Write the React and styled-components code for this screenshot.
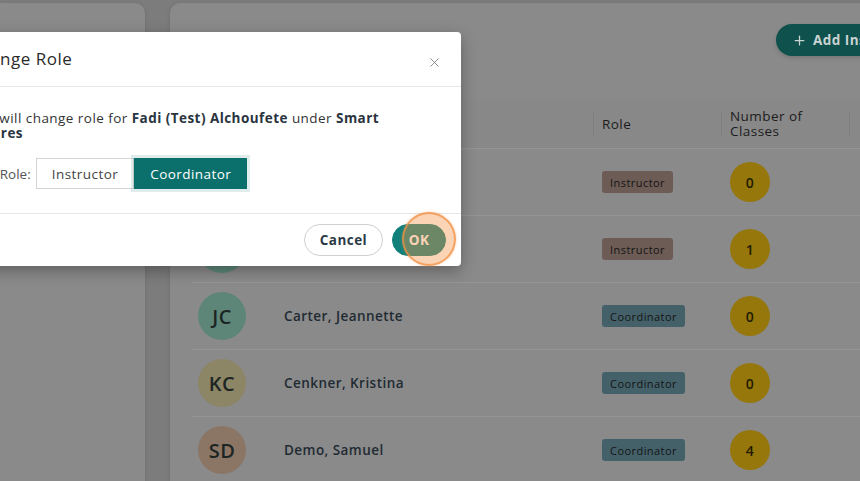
import React from 'react';
import styled, { createGlobalStyle } from 'styled-components';
import { X, Plus } from 'lucide-react';

const GlobalStyle = createGlobalStyle`
  body {
    margin: 0;
    background: #7c7c7c;
    font-family: "Open Sans", "Liberation Sans", sans-serif;
    letter-spacing: 0.45px;
    overflow: hidden;
  }
`;

const Page = styled.div`
  position: relative;
  width: 860px;
  height: 481px;
  overflow: hidden;
  display: flex;
  gap: 25px;
  padding-top: 3px;
  box-sizing: border-box;
`;

const SidePanel = styled.div`
  flex: 0 0 145px;
  background: #8a8a8a;
  border-radius: 0 10px 0 0;
  box-shadow: 0 1px 4px rgba(0, 0, 0, 0.12);
`;

const MainPanel = styled.div`
  flex: 0 0 773px;
  background: #8a8a8a;
  border-radius: 10px 0 0 0;
  padding: 21px 22px 0 22px;
  box-sizing: border-box;
  box-shadow: 0 1px 4px rgba(0, 0, 0, 0.12);
`;

const TopBar = styled.div`
  display: flex;
  justify-content: space-between;
  align-items: flex-start;
  height: 35px;
  margin-bottom: 41px;
`;

const Heading = styled.h1`
  margin: 6px 0 0;
  font-size: 20px;
  font-weight: 700;
  color: #1e1e1e;
`;

const AddButton = styled.button`
  margin-top: 0;
  height: 32px;
  width: 145px;
  flex-shrink: 0;
  border: none;
  border-radius: 16px;
  background: #0f514d;
  color: #c9d3d2;
  font-family: inherit;
  font-size: 13.5px;
  letter-spacing: 0.45px;
  font-weight: 700;
  white-space: nowrap;
  overflow: hidden;
  display: flex;
  align-items: center;
  gap: 6px;
  padding: 0 0 0 16px;
  box-shadow: 0 2px 4px rgba(0, 0, 0, 0.15);
`;

const Table = styled.div`
  display: grid;
  grid-template-columns: 401px 128px 128px 1fr;
`;

const HeadCell = styled.div`
  height: 48px;
  display: flex;
  align-items: center;
  padding-left: ${(p) => (p.$first ? '0' : '9px')};
  font-size: 13.5px;
  line-height: 15px;
  color: #1c1c1c;
  background: #888888;
  border-bottom: 1px solid #959595;
  position: relative;

  &::before {
    content: '';
    display: ${(p) => (p.$first ? 'none' : 'block')};
    position: absolute;
    left: 0;
    top: 12px;
    bottom: 12px;
    width: 1px;
    background: #7f7f7f;
  }
`;

const Cell = styled.div`
  height: 66px;
  display: flex;
  align-items: center;
  padding-left: ${(p) => (p.$first ? '6px' : '9px')};
  border-bottom: 1px solid #959595;
`;

const Avatar = styled.div`
  width: 48px;
  height: 48px;
  border-radius: 50%;
  background: ${(p) => p.$color};
  display: flex;
  align-items: center;
  justify-content: center;
  font-size: 20px;
  font-weight: 600;
  letter-spacing: 0.5px;
  color: #1c2524;
  margin-right: 38px;
`;

const Name = styled.span`
  font-size: 13.5px;
  font-weight: 600;
  color: #1f2a33;
`;

const Badge = styled.span`
  height: 22px;
  padding: 0 8px;
  border-radius: 3px;
  display: inline-flex;
  align-items: center;
  font-size: 11px;
  color: #141414;
  background: ${(p) => (p.$role === 'Instructor' ? '#6c5c55' : '#44616a')};
`;

const Count = styled.span`
  width: 40px;
  height: 40px;
  border-radius: 50%;
  background: #95770b;
  display: flex;
  align-items: center;
  justify-content: center;
  font-size: 14px;
  font-weight: 600;
  color: #231c00;
`;

const Modal = styled.div`
  position: absolute;
  left: -52px;
  top: 32px;
  width: 513px;
  background: #fff;
  border-radius: 4px;
  box-shadow: 0 5px 15px rgba(0, 0, 0, 0.3);
`;

const ModalHeader = styled.div`
  height: 54px;
  display: flex;
  align-items: center;
  justify-content: space-between;
  padding: 0 19px 0 20px;
  border-bottom: 1px solid #e6e6e6;
`;

const ModalTitle = styled.h2`
  margin: 0 0 2px;
  font-size: 17px;
  font-weight: 500;
  letter-spacing: 0.5px;
  color: #2b2b2b;
`;

const CloseButton = styled.button`
  border: none;
  background: none;
  padding: 0;
  margin-top: 6px;
  color: #777;
  display: flex;
`;

const ModalBody = styled.div`
  padding: 24px 20px 24px;
  border-bottom: 1px solid #e6e6e6;
`;

const Message = styled.p`
  margin: 0 0 17px;
  font-size: 13.5px;
  line-height: 15px;
  color: #333;
  padding-right: 50px;

  b {
    font-weight: 700;
    color: #2a3440;
  }
`;

const RoleRow = styled.div`
  display: flex;
  align-items: center;
  gap: 5px;
  font-size: 13.5px;
  letter-spacing: 0;
  color: #555;
`;

const Segmented = styled.div`
  display: flex;
`;

const Segment = styled.button`
  height: 31px;
  padding: 0 15px;
  font-family: inherit;
  font-size: 13.5px;
  letter-spacing: 0.45px;
  border: 1px solid ${(p) => (p.$active ? '#0b6f6b' : '#d4d4d4')};
  background: ${(p) => (p.$active ? '#0b6f6b' : '#fff')};
  color: ${(p) => (p.$active ? '#fff' : '#444')};
  box-shadow: ${(p) => (p.$active ? '0 0 0 3px rgba(11, 111, 107, 0.12)' : 'none')};
`;

const ModalFooter = styled.div`
  display: flex;
  justify-content: flex-end;
  gap: 9px;
  padding: 10px 15px 10px;
`;

const PillButton = styled.button`
  position: relative;
  height: 32px;
  width: ${(p) => (p.$primary ? '54px' : '79px')};
  padding: 0;
  border-radius: 16px;
  font-family: inherit;
  font-size: 13.5px;
  letter-spacing: 0.45px;
  font-weight: 700;
  border: 1px solid ${(p) => (p.$primary ? '#12807a' : '#cfcfcf')};
  background: ${(p) => (p.$primary ? '#12807a' : '#fff')};
  color: ${(p) => (p.$primary ? '#fff' : '#2c3a47')};
`;

const ClickMark = styled.span`
  position: absolute;
  left: 9px;
  top: -13px;
  width: 54px;
  height: 54px;
  border-radius: 50%;
  box-sizing: border-box;
  border: 2px solid rgba(240, 145, 70, 0.75);
  background: rgba(245, 145, 70, 0.4);
  box-shadow: 0 0 3px rgba(240, 145, 70, 0.4);
`;

const rows = [
  { initials: 'FA', name: 'Alchoufete, Fadi (Test)', color: '#5d8678', role: 'Instructor', count: 0 },
  { initials: 'AB', name: 'Bailey, Andrea', color: '#5d8678', role: 'Instructor', count: 1 },
  { initials: 'JC', name: 'Carter, Jeannette', color: '#5d8678', role: 'Coordinator', count: 0 },
  { initials: 'KC', name: 'Cenkner, Kristina', color: '#8c8566', role: 'Coordinator', count: 0 },
  { initials: 'SD', name: 'Demo, Samuel', color: '#8b7565', role: 'Coordinator', count: 4 },
];

export default function App() {
  return (
    <>
      <GlobalStyle />
      <Page>
        <SidePanel />
        <MainPanel>
          <TopBar>
            <Heading>Instructors</Heading>
            <AddButton>
              <Plus size={15} strokeWidth={2} />
              Add Instructor
            </AddButton>
          </TopBar>
          <Table>
            <HeadCell $first>Name</HeadCell>
            <HeadCell>Role</HeadCell>
            <HeadCell>Number of<br />Classes</HeadCell>
            <HeadCell />
            {rows.map((r) => (
              <React.Fragment key={r.name}>
                <Cell $first>
                  <Avatar $color={r.color}>{r.initials}</Avatar>
                  <Name>{r.name}</Name>
                </Cell>
                <Cell>
                  <Badge $role={r.role}>{r.role}</Badge>
                </Cell>
                <Cell>
                  <Count>{r.count}</Count>
                </Cell>
                <Cell />
              </React.Fragment>
            ))}
          </Table>
        </MainPanel>

        <Modal>
          <ModalHeader>
            <ModalTitle>Change Role</ModalTitle>
            <CloseButton>
              <X size={15} strokeWidth={1.3} />
            </CloseButton>
          </ModalHeader>
          <ModalBody>
            <Message>
              This will change role for <b>Fadi (Test) Alchoufete</b> under <b>Smart Futures</b>
            </Message>
            <RoleRow>
              New Role:
              <Segmented>
                <Segment>Instructor</Segment>
                <Segment $active>Coordinator</Segment>
              </Segmented>
            </RoleRow>
          </ModalBody>
          <ModalFooter>
            <PillButton>Cancel</PillButton>
            <PillButton $primary>
              OK
              <ClickMark />
            </PillButton>
          </ModalFooter>
        </Modal>
      </Page>
    </>
  );
}
